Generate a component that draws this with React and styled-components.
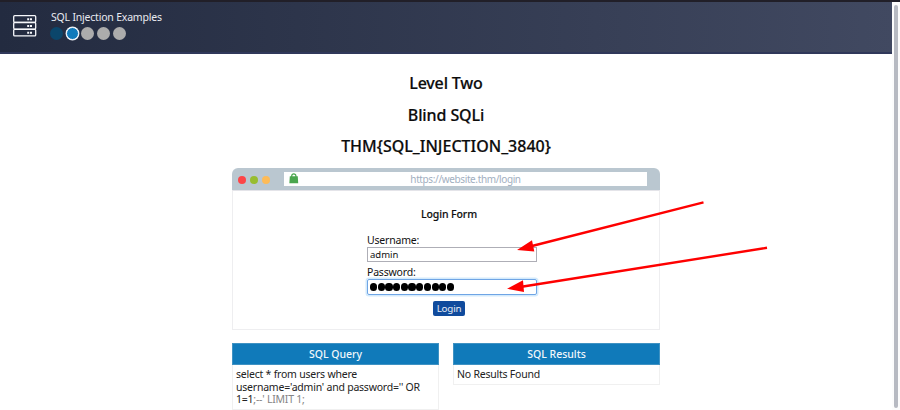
import React from "react";
import styled, { createGlobalStyle } from "styled-components";

const GlobalStyle = createGlobalStyle`
  *, *::before, *::after { box-sizing: border-box; }
  body { margin: 0; background: #fff; color: #111; overflow: hidden; font: 10.5px/13px "Noto Sans", "Open Sans", sans-serif; }
`;
const Page = styled.div`position: relative; display: flex; height: 410px; overflow: hidden; border-top: 2px solid #211f28;`;
const Main = styled.main`width: 892px; flex: none;`;
const ScrollTrack = styled.div`flex: 1; padding: 3px 2px 0; background: #fcfcfc;`;
const ScrollThumb = styled.div`width: 4px; height: 403px; border-radius: 2px; background: #b7bac2;`;
const Header = styled.header`
  display: flex; align-items: flex-start; height: 52px; padding: 9px 0 0 13px; gap: 14px;
  background: linear-gradient(90deg, #232b40, #414961); border-bottom: 2px solid #30385a;
  svg { margin-top: 4px; flex: none; }
`;
const HeaderTitle = styled.div`color: #e8eaf0; font-size: 10.5px; line-height: 13px; letter-spacing: -0.2px; white-space: nowrap;`;
const Steps = styled.div`display: flex; gap: 2.8px; margin: 3px 0 0 -1.3px;`;
const Step = styled.span`
  width: 13px; height: 13px; border-radius: 50%; background: ${(p) => p.$color};
  border: ${(p) => (p.$current ? "1.5px solid #f4f8fc" : "0")};
  ${(p) => p.$current && "box-shadow: 0 0 0 0.4px #f4f8fc;"}
`;
const Content = styled.div`width: 428px; margin: 0 auto; padding-top: 18px;`;
const Heading = styled.h2`
  margin: 0 0 9.5px; text-align: center; font-size: 16px; line-height: 22px; font-weight: 500;
  letter-spacing: ${(p) => p.$spacing || 0}px; color: #0c0c0c; white-space: nowrap;
  -webkit-text-stroke: 0.2px #0c0c0c;
`;
const BrowserBar = styled.div`
  display: flex; align-items: center; height: 22px; margin-top: 11px; padding: 0 13px 0 6px;
  border-radius: 6px 6px 0 0; background: #bac7d0;
`;
const Dots = styled.div`display: flex; gap: 4px; width: 46px; padding-top: 2px;`;
const Dot = styled.span`width: 8px; height: 8px; border-radius: 50%; background: ${(p) => p.$color};`;
const Address = styled.div`
  position: relative; flex: 1; height: 14px; margin-top: -1px; background: #fff; color: #a2afbf;
  font-size: 10px; line-height: 14px; letter-spacing: -0.38px; text-align: center;
  svg { position: absolute; left: 5px; top: 1px; }
`;
const BrowserBody = styled.div`
  display: flex; flex-direction: column; align-items: center; height: 140px; padding: 16px 0 0 12px;
  border: 1px solid #eeeef0; border-top-color: #e4e4e9;
`;
const FormTitle = styled.div`margin: 0 6px 12.5px 0; font-size: 10.5px; line-height: 14px; font-weight: 500; letter-spacing: -0.1px; -webkit-text-stroke: 0.15px #111;`;
const Form = styled.div`display: flex; flex-direction: column; width: 170px;`;
const Label = styled.label`height: 13px; font-size: 10.5px; line-height: 13px; letter-spacing: ${(p) => p.$spacing || 0}px;`;
const Field = styled.input`
  width: 170px; height: 15px; margin: 0 0 4px; padding: 0 2px; border: 1px solid #aeaeb6;
  background: #fff; font: 9.5px/13px "Noto Sans", sans-serif; color: #111; outline: 0;
`;
const PasswordField = styled.div`
  display: flex; align-items: center; gap: 0.5px; width: 170px; height: 16px; padding: 1px 0 0 2px;
  border: 1.5px solid #6fa5e5; border-radius: 2px; box-shadow: 0 0 0 1.5px #d3eafc;
  span { width: 7.2px; height: 7.2px; border-radius: 50%; background: #000; }
`;
const LoginButton = styled.button`
  align-self: center; width: 32px; height: 15px; margin: 6.5px 6px 0 0; padding: 0; border: 0; border-radius: 2px;
  background: #104b9d; color: #e6edf6; font: 9.8px/14px "Noto Sans", sans-serif; letter-spacing: -0.2px;
`;
const Panels = styled.div`display: flex; align-items: flex-start; gap: 14px; margin-top: 13px;`;
const Panel = styled.section`width: 207px; border: 1px solid #f0f0f0; border-top: 0;`;
const PanelTitle = styled.div`
  height: 22px; margin: 0 -1px; background: #107aba; border: 1px solid #3f92c3; color: #f1f7fb;
  text-align: center; font-weight: 500; line-height: 20px;
`;
const PanelBody = styled.div`
  padding: 3px 0 3px 3px; line-height: 12.6px; color: #222; white-space: nowrap;
  div { letter-spacing: -0.22px; }
`;
const Muted = styled.span`color: #858585;`;
const Annotations = styled.svg`position: absolute; left: 0; top: -2px; pointer-events: none;`;

function ServerIcon() {
  return (
    <svg width="24" height="22" viewBox="0 0 24 22" fill="none" stroke="#f6f7fb" strokeWidth="1.3">
      {[0.7, 7.5, 14.3].map((y) => (
        <g key={y}>
          <rect x="0.7" y={y} width="22" height="6.6" rx="1" />
          <path d={`M14.2 ${y + 3.5}h2M17 ${y + 3.5}h2`} strokeWidth="2" />
        </g>
      ))}
    </svg>
  );
}

function LockIcon() {
  return (
    <svg width="10" height="11" viewBox="0 0 10 11">
      <path d="M2.7 4V3a2.1 2.1 0 0 1 4.2 0v1" fill="none" stroke="#4aa64e" strokeWidth="1.2" />
      <path d="M.8 3.3h8l.4 7H.4z" fill="#4aa64e" />
    </svg>
  );
}

export default function App() {
  return (
    <>
      <GlobalStyle />
      <Page>
        <Main>
          <Header>
            <ServerIcon />
            <div>
              <HeaderTitle>SQL Injection Examples</HeaderTitle>
              <Steps>
                <Step $color="#0b466b" />
                <Step $color="#107abb" $current />
                <Step $color="#acacac" />
                <Step $color="#acacac" />
                <Step $color="#acacac" />
              </Steps>
            </div>
          </Header>
          <Content>
            <Heading $spacing={-0.15}>Level Two</Heading>
            <Heading $spacing={-0.1}>Blind SQLi</Heading>
            <Heading>THM&#123;SQL_INJECTION_3840&#125;</Heading>
            <BrowserBar>
              <Dots>
                <Dot $color="#fd4548" />
                <Dot $color="#98bd30" />
                <Dot $color="#fdbb57" />
              </Dots>
              <Address><LockIcon />https://website.thm/login</Address>
            </BrowserBar>
            <BrowserBody>
              <FormTitle>Login Form</FormTitle>
              <Form>
                <Label htmlFor="username" $spacing={-0.2}>Username:</Label>
                <Field id="username" defaultValue="admin" />
                <Label $spacing={-0.2}>Password:</Label>
                <PasswordField>
                  {Array.from({ length: 11 }, (_, i) => <span key={i} />)}
                </PasswordField>
                <LoginButton>Login</LoginButton>
              </Form>
            </BrowserBody>
            <Panels>
              <Panel>
                <PanelTitle>SQL Query</PanelTitle>
                <PanelBody>
                  <div>select * from users where</div>
                  <div>username='admin' and password='' OR</div>
                  <div>1=1<Muted>;--' LIMIT 1;</Muted></div>
                </PanelBody>
              </Panel>
              <Panel>
                <PanelTitle>SQL Results</PanelTitle>
                <PanelBody><div>No Results Found</div></PanelBody>
              </Panel>
            </Panels>
          </Content>
        </Main>
        <ScrollTrack><ScrollThumb /></ScrollTrack>
        <Annotations width="900" height="410" viewBox="0 0 900 410" fill="#fe0000" stroke="none">
          <path d="M703.5 202.3 530 246.5M767 247.8 520 287" stroke="#fe0000" strokeWidth="2.4" />
          <path d="M517 250 532 240.2 534.3 251.5ZM507 288.8 523 280.3 524 292Z" />
        </Annotations>
      </Page>
    </>
  );
}
